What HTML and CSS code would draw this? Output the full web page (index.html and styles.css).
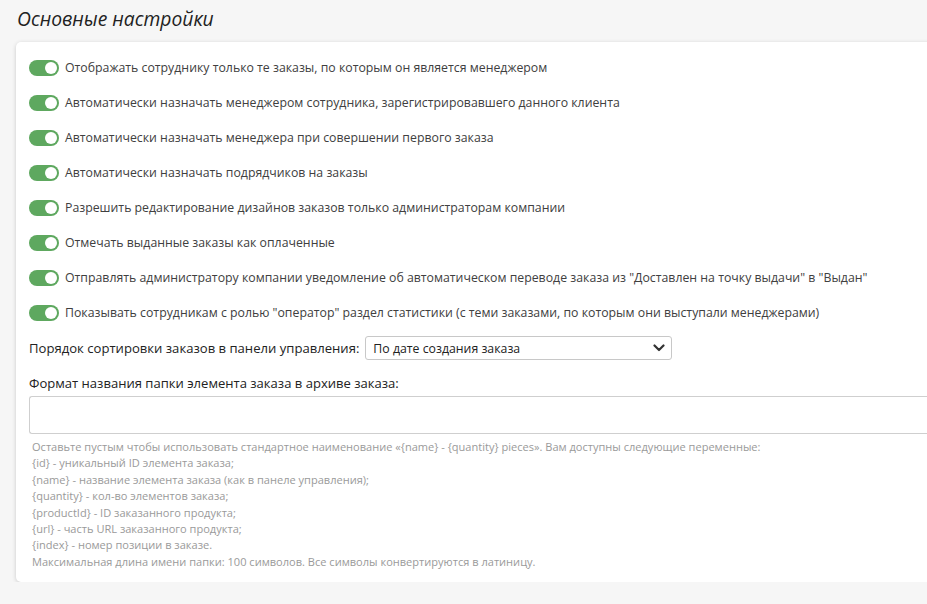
FILE: index.html
```html
<!DOCTYPE html>
<html lang="ru">
<head>
<meta charset="utf-8">
<link rel="stylesheet" href="styles.css">
</head>
<body>
<div class="page">
  <h2 class="title">Основные настройки</h2>
  <div class="card">
    <label class="row"><span class="toggle"><span class="knob"></span></span><span>Отображать сотруднику только те заказы, по которым он является менеджером</span></label>
    <label class="row"><span class="toggle"><span class="knob"></span></span><span>Автоматически назначать менеджером сотрудника, зарегистрировавшего данного клиента</span></label>
    <label class="row"><span class="toggle"><span class="knob"></span></span><span>Автоматически назначать менеджера при совершении первого заказа</span></label>
    <label class="row"><span class="toggle"><span class="knob"></span></span><span>Автоматически назначать подрядчиков на заказы</span></label>
    <label class="row"><span class="toggle"><span class="knob"></span></span><span>Разрешить редактирование дизайнов заказов только администраторам компании</span></label>
    <label class="row"><span class="toggle"><span class="knob"></span></span><span>Отмечать выданные заказы как оплаченные</span></label>
    <label class="row"><span class="toggle"><span class="knob"></span></span><span>Отправлять администратору компании уведомление об автоматическом переводе заказа из "Доставлен на точку выдачи" в "Выдан"</span></label>
    <label class="row"><span class="toggle"><span class="knob"></span></span><span>Показывать сотрудникам с ролью "оператор" раздел статистики (с теми заказами, по которым они выступали менеджерами)</span></label>
    <div class="sort">
      <span>Порядок сортировки заказов в панели управления:</span>
      <div class="select">
        <span>По дате создания заказа</span>
        <svg width="12" height="8" viewBox="0 0 12 8"><path d="M1.5 1.5 L6 6 L10.5 1.5" fill="none" stroke="#333" stroke-width="2.2" stroke-linecap="round" stroke-linejoin="round"/></svg>
      </div>
    </div>
    <div class="fmt-label">Формат названия папки элемента заказа в архиве заказа:</div>
    <div class="input"></div>
    <div class="help">
      <div>Оставьте пустым чтобы использовать стандартное наименование «{name} - {quantity} pieces». Вам доступны следующие переменные:</div>
      <div>{id} - уникальный ID элемента заказа;</div>
      <div>{name} - название элемента заказа (как в панеле управления);</div>
      <div>{quantity} - кол-во элементов заказа;</div>
      <div>{productId} - ID заказанного продукта;</div>
      <div>{url} - часть URL заказанного продукта;</div>
      <div>{index} - номер позиции в заказе.</div>
      <div>Максимальная длина имени папки: 100 символов. Все символы конвертируются в латиницу.</div>
    </div>
  </div>
</div>
</body>
</html>
```
FILE: styles.css
```css
html, body {
  margin: 0;
  padding: 0;
  background: #f6f6f6;
  font-family: "Open Sans", "Noto Sans", sans-serif;
  color: #404040;
  overflow: hidden;
}
.page {
  padding: 6px 0 0 16px;
  width: 960px;
}
.title {
  margin: 0 0 10px 1px;
  font-weight: 400;
  font-style: italic;
  font-size: 19.3px;
  line-height: 26px;
  color: #222;
}
.card {
  background: #fff;
  border-radius: 5px;
  box-shadow: 0 1px 4px rgba(0,0,0,0.18);
  padding: 17px 0 12px 13px;
}
.row {
  display: flex;
  align-items: center;
  gap: 6px;
  height: 17px;
  margin-bottom: 18px;
  font-size: 12.3px;
}
.row:last-of-type {
  margin-bottom: 15px;
}
.toggle {
  width: 30px;
  height: 16px;
  border-radius: 8px;
  background: #5ea85f;
  position: relative;
  flex: none;
}
.knob {
  position: absolute;
  right: 2px;
  top: 2px;
  width: 12px;
  height: 12px;
  border-radius: 50%;
  background: #fff;
}
.sort {
  display: flex;
  align-items: center;
  gap: 6px;
  font-size: 13.1px;
  color: #222;
}
.select {
  width: 292px;
  height: 22px;
  border: 1px solid #c8c8c8;
  border-radius: 3px;
  display: flex;
  align-items: center;
  justify-content: space-between;
  padding: 0 6px 0 7px;
  box-sizing: content-box;
  font-size: 12.3px;
}
.fmt-label {
  font-size: 13.05px;
  color: #222;
  margin-top: 14px;
  margin-bottom: 4px;
}
.input {
  height: 36px;
  border: 1px solid #cfcfcf;
  border-right: none;
  border-radius: 3px 0 0 3px;
}
.help {
  margin-top: 5px;
  font-size: 11.05px;
  line-height: 16.4px;
  color: #9a9a9a;
  padding-left: 3px;
}
```
